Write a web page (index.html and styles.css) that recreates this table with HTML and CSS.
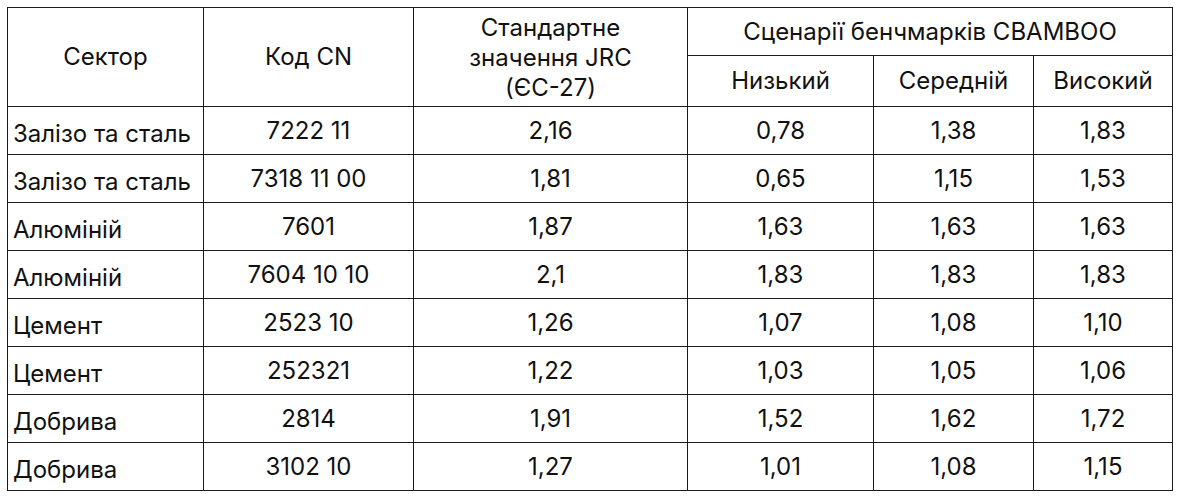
FILE: index.html
```html
<!DOCTYPE html>
<html lang="uk">
<head>
<meta charset="utf-8">
<link rel="stylesheet" href="styles.css">
</head>
<body>
<table class="bench">
  <colgroup>
    <col class="c1"><col class="c2"><col class="c3"><col class="c4"><col class="c5"><col class="c6">
  </colgroup>
  <thead>
    <tr class="h1">
      <th rowspan="2">Сектор</th>
      <th rowspan="2">Код CN</th>
      <th rowspan="2" class="multi">Стандартне<br>значення JRC<br>(ЄС-27)</th>
      <th colspan="3">Сценарії бенчмарків CBAMBOO</th>
    </tr>
    <tr class="h2">
      <th>Низький</th>
      <th>Середній</th>
      <th>Високий</th>
    </tr>
  </thead>
  <tbody>
    <tr><td class="sec">Залізо та сталь</td><td>7222 11</td><td>2,16</td><td>0,78</td><td>1,38</td><td>1,83</td></tr>
    <tr><td class="sec">Залізо та сталь</td><td>7318 11 00</td><td>1,81</td><td>0,65</td><td>1,15</td><td>1,53</td></tr>
    <tr><td class="sec">Алюміній</td><td>7601</td><td>1,87</td><td>1,63</td><td>1,63</td><td>1,63</td></tr>
    <tr><td class="sec">Алюміній</td><td>7604 10 10</td><td>2,1</td><td>1,83</td><td>1,83</td><td>1,83</td></tr>
    <tr><td class="sec">Цемент</td><td>2523 10</td><td>1,26</td><td>1,07</td><td>1,08</td><td>1,10</td></tr>
    <tr><td class="sec">Цемент</td><td>252321</td><td>1,22</td><td>1,03</td><td>1,05</td><td>1,06</td></tr>
    <tr><td class="sec">Добрива</td><td>2814</td><td>1,91</td><td>1,52</td><td>1,62</td><td>1,72</td></tr>
    <tr><td class="sec">Добрива</td><td>3102 10</td><td>1,27</td><td>1,01</td><td>1,08</td><td>1,15</td></tr>
  </tbody>
</table>
</body>
</html>
```
FILE: styles.css
```css
html, body {
  margin: 0;
  padding: 0;
  background: #ffffff;
}
body {
  font-family: "Inter", "Noto Sans", sans-serif;
  font-size: 24px;
  color: #111111;
}
.bench {
  border-collapse: collapse;
  margin: 7px 0 0 7px;
  table-layout: fixed;
  width: 1165px;
}
.c1 { width: 196px; }
.c2 { width: 210px; }
.c3 { width: 274px; }
.c4 { width: 186px; }
.c5 { width: 160px; }
.c6 { width: 139px; }
.bench th, .bench td {
  border: 1px solid #1a1a1a;
  font-weight: 400;
  text-align: center;
  vertical-align: middle;
  padding: 0 2px;
  line-height: 28px;
  white-space: nowrap;
}
.bench .multi {
  line-height: 30px;
  padding-top: 1px;
}
.h1 { height: 48px; }
.h2 { height: 51px; }
.bench tbody tr { height: 48px; }
.bench td.sec {
  text-align: left;
  padding: 6px 0 0 5px;
}
```
